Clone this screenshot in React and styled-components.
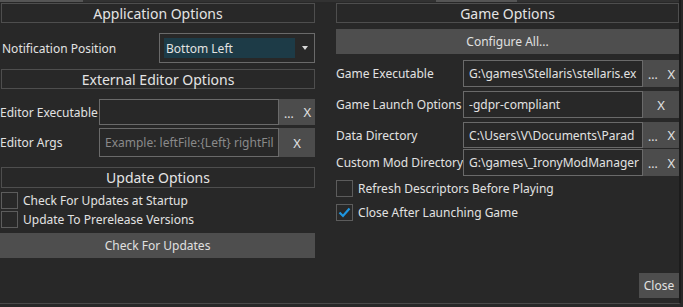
import React from "react";
import styled, { createGlobalStyle } from "styled-components";

const Global = createGlobalStyle`
  html, body {
    margin: 0;
    padding: 0;
    background: #282828;
  }
  body {
    font-family: "Noto Sans", "Open Sans", sans-serif;
    font-size: 12px;
    color: #e2e2e2;
  }
`;

const Window = styled.div`
  position: relative;
  width: 681px;
  height: 304px;
  box-sizing: border-box;
  background: #282828;
  border-right: 2px solid #1c1c1c;
  border-bottom: 1px solid #4a4a4a;
  display: flex;
  flex-direction: column;
`;

const TopStrip = styled.div`
  height: 2px;
  background: #323232;
  display: flex;
`;

const StripMark = styled.div`
  width: ${(p) => p.w}px;
  margin-left: ${(p) => p.at}px;
  background: #555;
`;

const Columns = styled.div`
  display: flex;
  gap: 21px;
`;

const Column = styled.div`
  display: flex;
  flex-direction: column;
  width: ${(p) => p.w}px;
`;

const Header = styled.div`
  margin-top: ${(p) => p.mt || 0}px;
  margin-left: ${(p) => p.ml || 0}px;
  height: ${(p) => p.h || 20}px;
  box-sizing: border-box;
  border: 1px solid #4e4e4e;
  display: flex;
  align-items: center;
  justify-content: center;
  font-size: 14px;
  color: #e4e4e4;
`;

const Row = styled.div`
  display: flex;
  align-items: center;
  margin-top: ${(p) => p.mt || 0}px;
  height: ${(p) => p.h}px;
`;

const Label = styled.div`
  width: ${(p) => p.w}px;
  flex-shrink: 0;
  white-space: nowrap;
  overflow: hidden;
  padding-left: ${(p) => p.pl || 0}px;
  box-sizing: border-box;
`;

const Combo = styled.div`
  flex: 1;
  height: 100%;
  box-sizing: border-box;
  border: 1px solid #6a6a6a;
  display: flex;
  align-items: center;
  padding: 0 4px;
`;

const Selected = styled.div`
  width: 131px;
  height: 20px;
  background: #1d3b47;
  display: flex;
  align-items: center;
  padding-left: 2px;
  box-sizing: border-box;
`;

const Arrow = styled.div`
  margin-left: auto;
  margin-right: 2px;
  width: 0;
  height: 0;
  border-left: 3.5px solid transparent;
  border-right: 3.5px solid transparent;
  border-top: 4px solid #d8d8d8;
`;

const TextBox = styled.div`
  width: 180px;
  flex-shrink: 0;
  height: 100%;
  box-sizing: border-box;
  border: 1px solid #6a6a6a;
  display: flex;
  align-items: center;
  padding-left: 5px;
  overflow: hidden;
  color: ${(p) => (p.placeholder ? "#8a8a8a" : "#e2e2e2")};
`;

const BoxText = styled.span`
  display: block;
  width: 100%;
  white-space: nowrap;
  overflow: hidden;
`;

const SideButtons = styled.div`
  flex: 1;
  height: 100%;
  background: #4c4c4c;
  display: flex;
  align-items: center;
  justify-content: ${(p) => (p.single ? "center" : "space-between")};
  padding: 0 ${(p) => (p.single ? 0 : 4)}px 0 ${(p) => (p.single ? 0 : 5)}px;
  font-size: 13px;
`;

const Dots = styled.span`
  font-size: 12px;
  padding-top: 2px;
`;

const CheckRow = styled.div`
  display: flex;
  align-items: center;
  gap: 5px;
  margin-top: ${(p) => p.mt || 0}px;
  margin-left: ${(p) => p.ml || 0}px;
  height: 17px;
`;

const Box = styled.div`
  width: 17px;
  height: 17px;
  box-sizing: border-box;
  border: 1px solid #5c5c5c;
  display: flex;
  align-items: center;
  justify-content: center;
`;

const Button = styled.div`
  margin-top: ${(p) => p.mt || 0}px;
  height: 25px;
  background: #4e4e4e;
  display: flex;
  align-items: center;
  justify-content: center;
  color: #e0e0e0;
`;

const Footer = styled.div`
  margin-top: auto;
  margin-bottom: 5px;
  display: flex;
  justify-content: flex-end;
`;

const CloseButton = styled.div`
  width: 40px;
  height: 25px;
  background: #4e4e4e;
  display: flex;
  align-items: center;
  justify-content: center;
`;

const Check = () => (
  <svg width="13" height="11" viewBox="0 0 13 11">
    <path d="M1.5 5.5 L5 9 L11.5 1.5" fill="none" stroke="#1e96e0" strokeWidth="2.2" />
  </svg>
);

const Option = ({ checked, children, mt, ml }) => (
  <CheckRow mt={mt} ml={ml}>
    <Box>{checked && <Check />}</Box>
    <span>{children}</span>
  </CheckRow>
);

// the box shows only the part of a long path that fits, as in the app
const PathRow = ({ label, value, placeholder, single, mt, h, labelW }) => (
  <Row mt={mt} h={h}>
    <Label w={labelW}>{label}</Label>
    <TextBox placeholder={placeholder ? 1 : 0}>
      <BoxText>{value || placeholder}</BoxText>
    </TextBox>
    <SideButtons single={single}>
      {!single && <Dots>...</Dots>}
      <span>X</span>
    </SideButtons>
  </Row>
);

export default function App() {
  return (
    <>
      <Global />
      <Window>
        <TopStrip>
          <StripMark at={0} w={83} />
          <StripMark at={353} w={81} />
        </TopStrip>
        <Columns>
          <Column w={316}>
            <Header mt={1} ml={1}>Application Options</Header>
            <Row mt={10} h={30}>
              <Label w={159} pl={2}>Notification Position</Label>
              <Combo>
                <Selected>Bottom Left</Selected>
                <Arrow />
              </Combo>
            </Row>
            <Header mt={6} ml={1}>External Editor Options</Header>
            <PathRow mt={10} h={26} labelW={99} label=" Editor Executable" />
            <PathRow
              mt={3}
              h={29}
              labelW={99}
              label=" Editor Args"
              placeholder="Example: leftFile:{Left} rightFil"
              single
            />
            <Header mt={10} ml={1} h={21}>Update Options</Header>
            <Option mt={4} ml={1}>Check For Updates at Startup</Option>
            <Option mt={2} ml={1}>Update To Prerelease Versions</Option>
            <Button mt={5}>Check For Updates</Button>
          </Column>
          <Column w={344}>
            <Header mt={1}>Game Options</Header>
            <Button mt={6}>Configure All...</Button>
            <PathRow mt={6} h={27} labelW={127} label="Game Executable" value="G:\games\Stellaris\stellaris.ex" />
            <PathRow mt={4} h={27} labelW={127} label="Game Launch Options" value="-gdpr-compliant" single />
            <PathRow mt={4} h={26} labelW={127} label="Data Directory" value="C:\Users\V\Documents\Parad" />
            <PathRow mt={1} h={27} labelW={127} label="Custom Mod Directory" value="G:\games\_IronyModManager" />
            <Option mt={4}>Refresh Descriptors Before Playing</Option>
            <Option mt={7} checked>Close After Launching Game</Option>
          </Column>
        </Columns>
        <Footer>
          <CloseButton>Close</CloseButton>
        </Footer>
      </Window>
    </>
  );
}
